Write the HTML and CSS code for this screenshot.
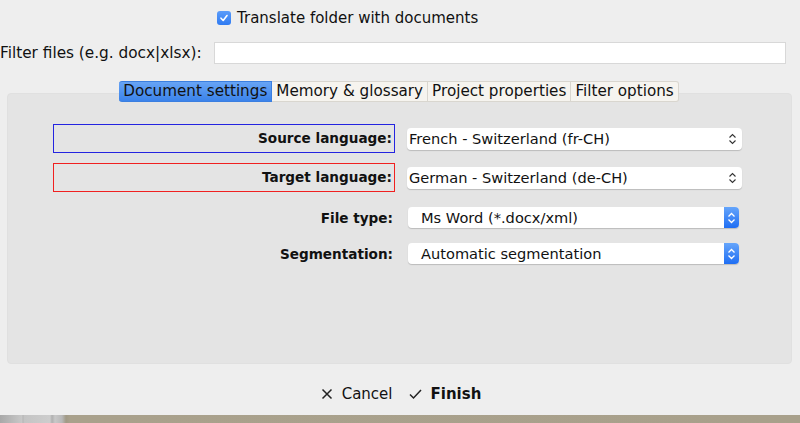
FILE: index.html
```html
<!DOCTYPE html>
<html>
<head>
<meta charset="utf-8">
<link rel="stylesheet" href="styles.css">
</head>
<body>
<div class="dialog">
  <div class="row-check">
    <span class="checkbox"><svg width="10" height="10" viewBox="0 0 10 10"><path d="M2 5.2 L4.2 7.5 L8 2.5" fill="none" stroke="#fff" stroke-width="1.6" stroke-linecap="round" stroke-linejoin="round"/></svg></span>
    <span class="check-label">Translate folder with documents</span>
  </div>
  <div class="row-filter">
    <span class="filter-label">Filter files (e.g. docx|xlsx):</span>
    <span class="filter-input"></span>
  </div>
  <div class="tabs">
    <span class="tab active">Document settings</span>
    <span class="tab">Memory &amp; glossary</span>
    <span class="tab">Project properties</span>
    <span class="tab">Filter options</span>
  </div>
  <div class="panel">
    <div class="form">
      <div class="label boxed blue">Source language:</div>
      <div class="combo plain"><span class="combo-text">French - Switzerland (fr-CH)</span><span class="spin"><svg width="9" height="12" viewBox="0 0 9 12"><path d="M1.5 4.5 L4.5 1.5 L7.5 4.5 M1.5 7.5 L4.5 10.5 L7.5 7.5" fill="none" stroke="#333" stroke-width="1.1"/></svg></span></div>
      <div class="label boxed red">Target language:</div>
      <div class="combo plain second"><span class="combo-text">German - Switzerland (de-CH)</span><span class="spin"><svg width="9" height="12" viewBox="0 0 9 12"><path d="M1.5 4.5 L4.5 1.5 L7.5 4.5 M1.5 7.5 L4.5 10.5 L7.5 7.5" fill="none" stroke="#333" stroke-width="1.1"/></svg></span></div>
      <div class="label row3">File type:</div>
      <div class="combo popup row3"><span class="combo-text">Ms Word (*.docx/xml)</span><span class="spin blue"><svg width="9" height="12" viewBox="0 0 9 12"><path d="M1.5 4.5 L4.5 1.5 L7.5 4.5 M1.5 7.5 L4.5 10.5 L7.5 7.5" fill="none" stroke="#fff" stroke-width="1.3"/></svg></span></div>
      <div class="label row4">Segmentation:</div>
      <div class="combo popup row4"><span class="combo-text">Automatic segmentation</span><span class="spin blue"><svg width="9" height="12" viewBox="0 0 9 12"><path d="M1.5 4.5 L4.5 1.5 L7.5 4.5 M1.5 7.5 L4.5 10.5 L7.5 7.5" fill="none" stroke="#fff" stroke-width="1.3"/></svg></span></div>
    </div>
  </div>
  <div class="footer">
    <span class="btn"><svg width="12" height="12" viewBox="0 0 12 12"><path d="M1.5 1.5 L10.5 10.5 M10.5 1.5 L1.5 10.5" stroke="#222" stroke-width="1.5"/></svg>Cancel</span>
    <span class="btn bold"><svg width="13" height="12" viewBox="0 0 13 12"><path d="M1 6.5 L4.5 10 L12 2" fill="none" stroke="#222" stroke-width="1.5"/></svg>Finish</span>
  </div>
</div>
<div class="desktop"></div>
</body>
</html>
```
FILE: styles.css
```css
html, body {
  margin: 0;
  padding: 0;
}
body {
  width: 800px;
  height: 423px;
  overflow: hidden;
  background: #eeeeee;
  font-family: "DejaVu Sans", sans-serif;
  font-size: 14px;
  color: #111;
}
.dialog {
  height: 415px;
  background: #eeeeee;
  display: flex;
  flex-direction: column;
}
.row-check {
  display: flex;
  align-items: center;
  padding-left: 217px;
  height: 20px;
  margin-top: 8px;
  gap: 6px;
}
.checkbox {
  width: 14px;
  height: 14px;
  border-radius: 3px;
  background: linear-gradient(#5b9cf9, #2f7bf2);
  display: flex;
  align-items: center;
  justify-content: center;
}
.check-label {
  font-size: 15px;
}
.row-filter {
  display: flex;
  align-items: center;
  margin-top: 14px;
  height: 22px;
}
.filter-label {
  font-size: 15.3px;
  width: 214px;
  white-space: nowrap;
}
.filter-input {
  width: 570px;
  height: 20px;
  background: #fff;
  border: 1px solid #d8d8d8;
}
.tabs {
  display: flex;
  justify-content: center;
  margin-top: 17px;
  margin-bottom: -9px;
  position: relative;
  z-index: 1;
  padding-right: 2px;
}
.tab {
  font-size: 15.2px;
  height: 19px;
  line-height: 19px;
  padding: 0 4px;
  background: #f6f4ef;
  border: 1px solid #d9d6cf;
  border-left: none;
}
.tab.active {
  background: linear-gradient(#67a4f5, #3b83ea);
  border-color: #3b7fe0;
  border-radius: 3px 0 0 3px;
}
.tab:last-child {
  border-radius: 0 3px 3px 0;
}
.panel {
  margin: 0 8px 0 7px;
  height: 269px;
  background: #e4e4e4;
  border: 1px solid #e0e0e0;
  border-radius: 4px;
}
.form {
  display: grid;
  grid-template-columns: 342px 335px;
  column-gap: 12px;
  margin-left: 45px;
  margin-top: 30px;
  align-items: center;
}
.label {
  font-weight: bold;
  font-size: 13.6px;
  text-align: right;
  padding-right: 2px;
  box-sizing: border-box;
}
.boxed {
  height: 29px;
  line-height: 27px;
}
.boxed.blue {
  border: 1px solid #2424e0;
}
.boxed.red {
  border: 1px solid #f02020;
  margin-top: 10px;
}
.combo.second {
  margin-top: 10px;
}
.combo {
  display: flex;
  align-items: center;
  height: 22px;
  background: #fff;
  border-radius: 4px;
  box-shadow: 0 1px 1px rgba(0, 0, 0, 0.18);
  font-size: 14.6px;
}
.combo.plain .combo-text {
  padding-left: 2px;
}
.combo-text {
  flex: 1;
  white-space: nowrap;
}
.combo.popup {
  width: 331px;
  margin-left: 1px;
  height: 21px;
}
.combo.popup .combo-text {
  padding-left: 13px;
}
.row3 {
  margin-top: 15px;
}
.row4 {
  margin-top: 15px;
}
.spin {
  width: 16px;
  height: 100%;
  display: flex;
  align-items: center;
  justify-content: center;
  margin-right: 2px;
}
.spin.blue {
  margin-right: 0;
  width: 15px;
  background: linear-gradient(#65a5fb, #1f6ef3);
  border-radius: 0 4px 4px 0;
}
.footer {
  display: flex;
  justify-content: center;
  gap: 16px;
  margin-top: 21px;
  padding-left: 2px;
  font-size: 15px;
}
.btn {
  display: flex;
  align-items: center;
  gap: 9px;
}
.btn.bold {
  font-weight: bold;
}
.desktop {
  height: 8px;
  background: linear-gradient(to right, #a8a8a8 0, #c8c8c8 22px, #b4b4b4 23px, #c4c4c4 24px, #cdcdcd 50px, #b0b0b0 52px, #c8c8c8 55px, #b8b8b8 62px, #a19a86 66px, #a9a18c 70px, #a8a08b 100%);
}
```
